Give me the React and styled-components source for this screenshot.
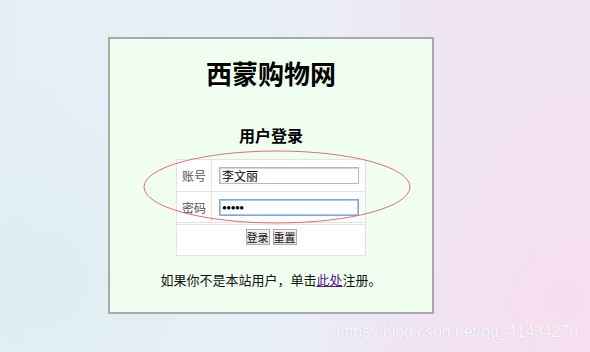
import React from "react";
import styled, { createGlobalStyle } from "styled-components";

const Global = createGlobalStyle`
  html, body { margin: 0; padding: 0; }
  body {
    width: 590px;
    height: 352px;
    overflow: hidden;
    font-family: "Noto Sans CJK SC", "Liberation Sans", sans-serif;
  }
`;

const Page = styled.div`
  position: relative;
  width: 590px;
  height: 352px;
  box-sizing: border-box;
  padding: 37px 0 0 108px;
  background:
    radial-gradient(ellipse 260px 240px at 560px 300px, rgba(246, 222, 240, 0.95), rgba(246, 222, 240, 0) 100%),
    radial-gradient(ellipse 200px 200px at 540px 60px, rgba(240, 226, 240, 0.9), rgba(240, 226, 240, 0) 100%),
    radial-gradient(ellipse 220px 200px at 30px 280px, rgba(222, 238, 240, 0.9), rgba(222, 238, 240, 0) 100%),
    linear-gradient(90deg, #e4eef4 0%, #e8eff8 45%, #ede7f5 75%, #f3e3f1 100%);
`;

const Card = styled.div`
  width: 326px;
  height: 277px;
  box-sizing: border-box;
  border: 2px solid #a9a9a9;
  background: #f0fff0;
  display: flex;
  flex-direction: column;
  align-items: center;
`;

const Header = styled.div`
  height: 68px;
  width: 100%;
  display: flex;
  align-items: center;
  justify-content: center;
`;

const Title = styled.h1`
  margin: 0;
  font-size: 26px;
  line-height: 30px;
  font-weight: 700;
  color: #000;
`;

const Divider = styled.div`
  width: 100%;
  height: 1px;
  background: #f8f3e2;
`;

const SubTitle = styled.h2`
  margin: 17px 0 0;
  font-size: 16px;
  line-height: 20px;
  font-weight: 700;
  color: #000;
`;

const FormBox = styled.div`
  margin-top: 14px;
  width: 190px;
  box-sizing: border-box;
  border: 1px solid #e3e3e3;
  background: #ffffff;
`;

const Row = styled.div`
  display: grid;
  grid-template-columns: 35px 1fr;
  height: ${(p) => p.$h}px;
  border-bottom: 1px solid #e3e3e3;
`;

const Label = styled.div`
  border-right: 1px solid #e3e3e3;
  display: flex;
  align-items: center;
  justify-content: center;
  font-size: 12px;
  color: #555;
`;

const Field = styled.div`
  display: flex;
  align-items: center;
  padding-left: 7px;
`;

const Input = styled.div`
  width: 140px;
  height: 17px;
  box-sizing: border-box;
  border: 1px solid ${(p) => (p.$focus ? "#7aa6e8" : "#b9b9b9")};
  box-shadow: ${(p) => (p.$focus ? "inset 0 0 0 1px #a9c6f2" : "inset 1px 1px 0 #d6d6d6")};
  background: #fff;
  font-size: 12px;
  line-height: 15px;
  padding-left: 2px;
  color: #000;
  display: flex;
  align-items: center;
`;

const Dots = styled.span`
  font-family: "Liberation Sans", sans-serif;
  font-size: 8px;
  letter-spacing: -0.5px;
  line-height: 15px;
`;

const Gap = styled.div`
  height: 1px;
`;

const ButtonRow = styled.div`
  border-top: 1px solid #e3e3e3;
  height: 31px;
  display: flex;
  justify-content: center;
  gap: 3px;
  padding-top: 4px;
  box-sizing: border-box;
`;

const Button = styled.button`
  width: 24px;
  height: 16px;
  padding: 0;
  margin: 0;
  box-sizing: border-box;
  border: 1px solid #adadad;
  background: linear-gradient(#f3f3f3, #e0e0e0);
  font-family: "Noto Sans CJK SC", sans-serif;
  font-size: 11px;
  line-height: 14px;
  color: #111;
  white-space: nowrap;
  overflow: hidden;
`;

const Footer = styled.p`
  margin: 15px 0 0;
  font-size: 13px;
  line-height: 18px;
  color: #111;
`;

const Link = styled.a`
  color: #551a8b;
  text-decoration: underline;
`;

const Ellipse = styled.svg`
  position: absolute;
  left: 142px;
  top: 150px;
  overflow: visible;
`;

const Watermark = styled.div`
  position: absolute;
  right: 12px;
  bottom: 11px;
  font-family: "Liberation Sans", Arial, sans-serif;
  font-size: 16px;
  color: rgba(255, 255, 255, 0.9);
  text-shadow: 0 0 1px rgba(120, 120, 130, 0.35);
  letter-spacing: -0.1px;
`;

export default function App() {
  return (
    <>
      <Global />
      <Page>
        <Card>
          <Header>
            <Title>西蒙购物网</Title>
          </Header>
          <Divider />
          <SubTitle>用户登录</SubTitle>
          <FormBox>
            <Row $h={31}>
              <Label>账号</Label>
              <Field>
                <Input>李文丽</Input>
              </Field>
            </Row>
            <Row $h={30}>
              <Label>密码</Label>
              <Field>
                <Input $focus>
                  <Dots>●●●●●</Dots>
                </Input>
              </Field>
            </Row>
            <Gap />
            <ButtonRow>
              <Button>登录</Button>
              <Button>重置</Button>
            </ButtonRow>
          </FormBox>
          <Footer>
            如果你不是本站用户，单击<Link href="#">此处</Link>注册。
          </Footer>
        </Card>
        <Ellipse width="270" height="75" viewBox="0 0 270 75">
          <ellipse cx="135" cy="37" rx="133" ry="36" fill="none" stroke="#ea6b6b" strokeWidth="1" />
        </Ellipse>
        <Watermark>https://blog.csdn.net/qq_41434270</Watermark>
      </Page>
    </>
  );
}
